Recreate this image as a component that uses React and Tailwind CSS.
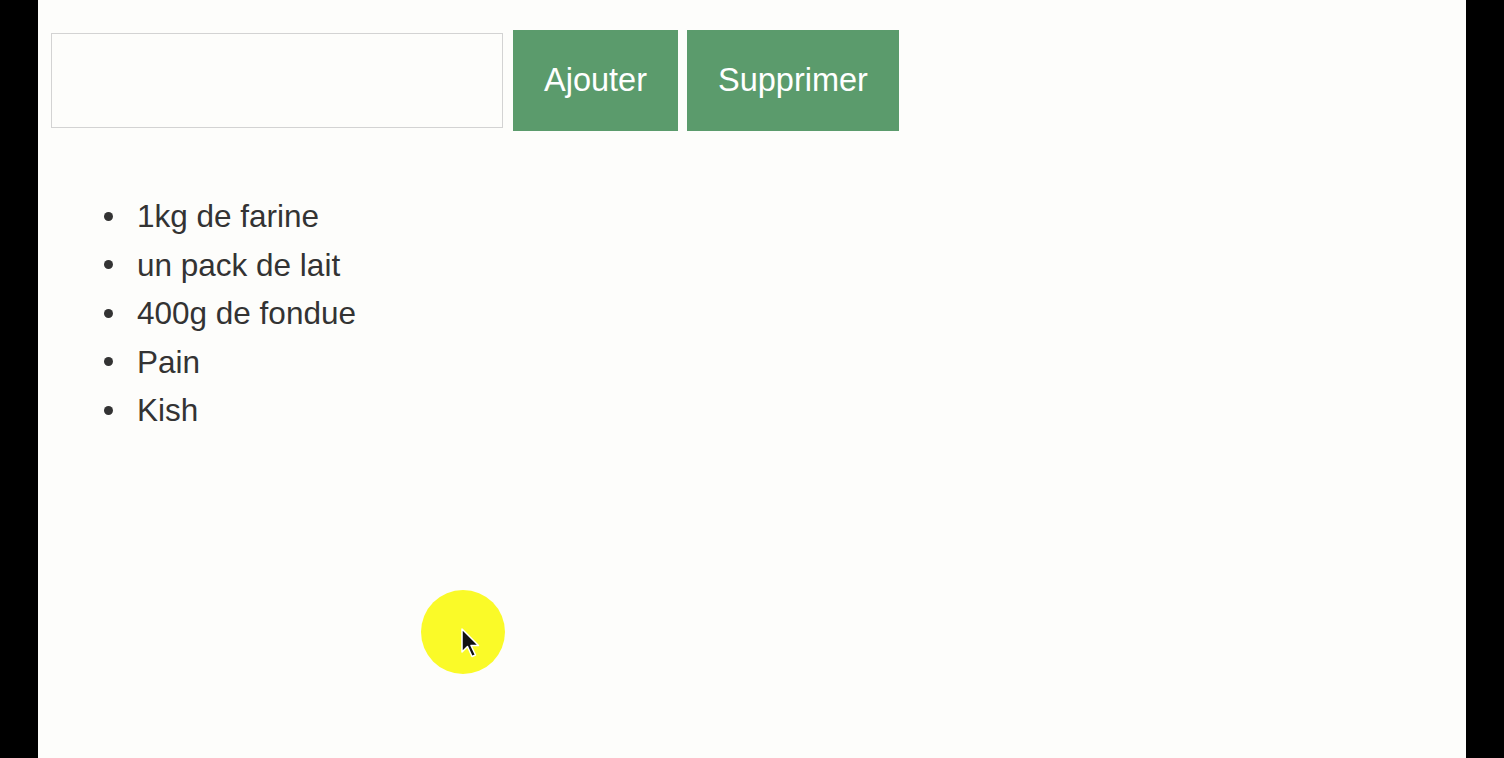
import React from "react";

export default function App() {
  const items = ["1kg de farine", "un pack de lait", "400g de fondue", "Pain", "Kish"];
  return (
    <div className="w-[1504px] h-[758px] bg-black flex" style={{ fontFamily: '"Liberation Sans", Arial, sans-serif' }}>
      <div className="ml-[38px] w-[1428px] h-full bg-[#fdfdfb] relative">
        <div className="flex items-center pt-[30px] pl-[13px]">
          <div className="w-[452px] h-[95px] border border-[#d3d3d3] bg-[#fdfdfb]" />
          <div className="ml-[10px] w-[165px] h-[101px] bg-[#5b9b6c] text-white text-[32.5px] flex items-center justify-center">Ajouter</div>
          <div className="ml-[9px] w-[212px] h-[101px] bg-[#5b9b6c] text-white text-[32.5px] flex items-center justify-center">Supprimer</div>
        </div>
        <ul className="mt-[61px] pl-[99px] text-[#333333] text-[31.5px] leading-[48.5px]">
          {items.map((t) => (
            <li key={t} className="flex items-center">
              <span className="w-[9px] h-[9px] rounded-full bg-[#333333] ml-[-33px] mr-[24px]" />
              <span>{t}</span>
            </li>
          ))}
        </ul>
        <div className="absolute left-[383px] top-[590px] w-[84px] h-[84px] rounded-full bg-[#fafa28]">
          <svg className="absolute left-[39px] top-[37px]" width="22" height="32" viewBox="0 0 22 32">
            <path d="M2 2 L2 25 L7.5 19.5 L12 29.5 L15.5 28 L11 18.5 L18.5 18.5 Z" fill="#111" stroke="#fff" strokeWidth="1.5" strokeLinejoin="round" />
          </svg>
        </div>
      </div>
    </div>
  );
}
